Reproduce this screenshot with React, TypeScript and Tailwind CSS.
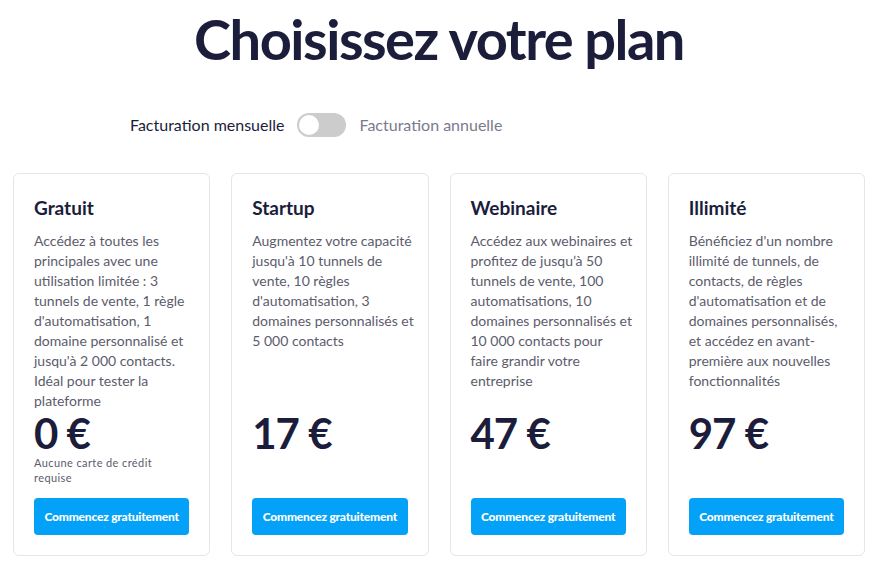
import { useState } from "react"

const plans = [
  {
    name: "Gratuit",
    price: "0 €",
    note: ["Aucune carte de crédit", "requise"],
    lines: [
      "Accédez à toutes les",
      "principales avec une",
      "utilisation limitée : 3",
      "tunnels de vente, 1 règle",
      "d'automatisation, 1",
      "domaine personnalisé et",
      "jusqu'à 2 000 contacts.",
      "Idéal pour tester la",
      "plateforme",
    ],
  },
  {
    name: "Startup",
    price: "17 €",
    note: [],
    lines: [
      "Augmentez votre capacité",
      "jusqu'à 10 tunnels de",
      "vente, 10 règles",
      "d'automatisation, 3",
      "domaines personnalisés et",
      "5 000 contacts",
    ],
  },
  {
    name: "Webinaire",
    price: "47 €",
    note: [],
    lines: [
      "Accédez aux webinaires et",
      "profitez de jusqu’à 50",
      "tunnels de vente, 100",
      "automatisations, 10",
      "domaines personnalisés et",
      "10 000 contacts pour",
      "faire grandir votre",
      "entreprise",
    ],
  },
  {
    name: "Illimité",
    price: "97 €",
    note: [],
    lines: [
      "Bénéficiez d'un nombre",
      "illimité de tunnels, de",
      "contacts, de règles",
      "d'automatisation et de",
      "domaines personnalisés,",
      "et accédez en avant-",
      "première aux nouvelles",
      "fonctionnalités",
    ],
  },
]

function PlanCard({ plan }: { plan: (typeof plans)[number] }) {
  return (
    <div className="flex flex-col rounded-md border border-[#e6e6e9] bg-white px-5 pt-5 pb-5">
      <h2 className="text-[19px] leading-[27px] font-bold text-[#1b1d3b]">{plan.name}</h2>
      <div className="mt-[10px] min-h-[182px] text-[14px] leading-[20px] text-[#5c5c6c]">
        {plan.lines.map((l) => (
          <div key={l} className="whitespace-nowrap">
            {l}
          </div>
        ))}
      </div>
      <div className="text-[42px] leading-[40px] font-bold tracking-[-1px] text-[#1b1d3b]">{plan.price}</div>
      <div className="mt-[2px] min-h-[30px] text-[11px] leading-[15px] tracking-[0.4px] text-[#5c5c6c]">
        {plan.note.map((n) => (
          <div key={n}>{n}</div>
        ))}
      </div>
      <button className="mt-[13px] h-[37px] w-full rounded-[4px] bg-[#03a1f7] text-[12px] font-black tracking-[-0.2px] text-white">
        Commencez gratuitement
      </button>
    </div>
  )
}

export default function App() {
  const [annual, setAnnual] = useState(false)

  return (
    <div className="min-h-[569px] bg-white font-['Lato',sans-serif]">
      <h1 className="flex h-[78px] items-center justify-center text-[56px] font-bold tracking-[-1.5px] text-[#1b1d3b]">
        Choisissez votre plan
      </h1>
      <div className="mt-[35px] flex items-center pl-[130px]">
        <span className="text-[16px] text-[#1b1d3b]">Facturation mensuelle</span>
        <button
          onClick={() => setAnnual(!annual)}
          className={`ml-[12px] flex h-[24px] w-[49px] items-center rounded-full px-[2px] ${annual ? "justify-end bg-[#03a1f7]" : "justify-start bg-[#cccccc]"}`}
        >
          <span className="h-[20px] w-[20px] rounded-full bg-white" />
        </button>
        <span className="ml-[14px] text-[16px] text-[#7b7a8c]">Facturation annuelle</span>
      </div>
      <div className="mx-[13px] mt-[36px] grid grid-cols-4 gap-[21px]">
        {plans.map((p) => (
          <PlanCard key={p.name} plan={p} />
        ))}
      </div>
    </div>
  )
}
